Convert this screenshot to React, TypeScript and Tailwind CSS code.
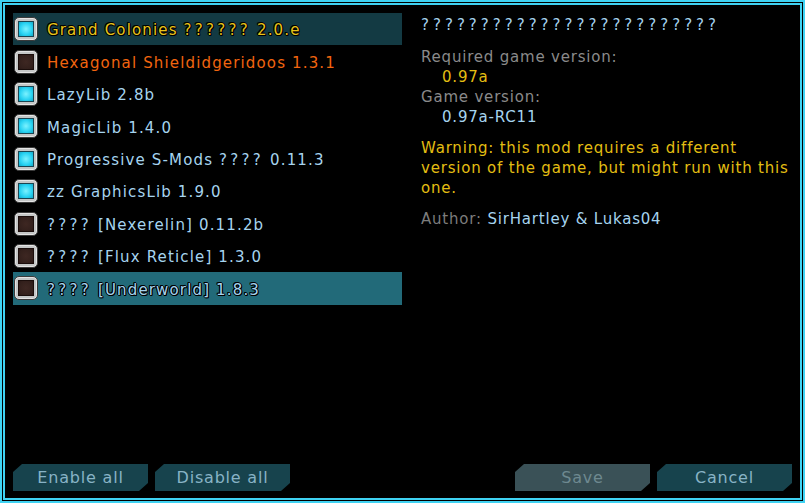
import React from "react";

type Mod = { name: string; on: boolean; color: string; bg?: string; outline?: boolean };

const mods: Mod[] = [
  { name: "Grand Colonies ?????? 2.0.e", on: true, color: "text-[#e8c41a]", bg: "bg-[#133a43]", outline: true },
  { name: "Hexagonal Shieldidgeridoos 1.3.1", on: false, color: "text-[#f2650f]" },
  { name: "LazyLib 2.8b", on: true, color: "text-[#a6d4ef]" },
  { name: "MagicLib 1.4.0", on: true, color: "text-[#a6d4ef]" },
  { name: "Progressive S-Mods ???? 0.11.3", on: true, color: "text-[#a6d4ef]" },
  { name: "zz GraphicsLib 1.9.0", on: true, color: "text-[#a6d4ef]" },
  { name: "???? [Nexerelin] 0.11.2b", on: false, color: "text-[#a6d4ef]" },
  { name: "???? [Flux Reticle] 1.3.0", on: false, color: "text-[#a6d4ef]" },
  { name: "???? [Underworld] 1.8.3", on: false, color: "text-[#a6d4ef]", bg: "bg-[#226a79]", outline: true },
];

function Q({ text }: { text: string }) {
  const parts = text.split(/(\?+)/);
  return (
    <>
      {parts.map((p, i) =>
        p.startsWith("?") ? (
          <span key={i} className="tracking-[3.3px]">
            {p}
          </span>
        ) : (
          <React.Fragment key={i}>{p}</React.Fragment>
        )
      )}
    </>
  );
}

function Check({ on }: { on: boolean }) {
  return (
    <div className="w-[24px] h-[24px] shrink-0 rounded-[5px] bg-[#c4c6c6] border border-[#3a3a3a] p-[3px] shadow-[inset_0_0_0_1px_#e4e4e4]">
      {on ? (
        <div className="w-full h-full border border-[#1b4450] bg-[radial-gradient(circle,#7cf2ff_0%,#28d2f2_60%,#14a8c8_100%)]" />
      ) : (
        <div className="w-full h-full border border-[#1a0d0b] bg-[radial-gradient(circle,#3e2722_0%,#33201c_70%,#2a1815_100%)]" />
      )}
    </div>
  );
}

function Btn({ label, disabled }: { label: string; disabled?: boolean }) {
  return (
    <div
      className={`w-[135px] h-[27px] flex items-center justify-center text-[16px] tracking-[0.8px] [clip-path:polygon(9px_0,100%_0,100%_calc(100%-8px),calc(100%-9px)_100%,0_100%,0_8px)] ${
        disabled ? "bg-[#3a5157] text-[#6e8990]" : "bg-[#17434d] text-[#88b3c6]"
      }`}
      style={{ fontFamily: '"DejaVu Sans", sans-serif' }}
    >
      {label}
    </div>
  );
}

export default function App() {
  const font = { fontFamily: '"DejaVu Sans", sans-serif' };
  return (
    <div className="w-[805px] h-[503px] bg-black border-2 border-[#3fd2f2] p-px" style={font}>
      <div className="w-full h-full border-2 border-[#3fd2f2] flex flex-col px-[8px] pt-[8px] pb-[7px]">
        <div className="flex flex-1">
          <div className="w-[389px] shrink-0 flex flex-col">
            {mods.map((m) => (
              <div key={m.name} className={`h-[32.4px] flex items-center pl-[1px] gap-[9px] ${m.bg ?? ""}`}>
                <Check on={m.on} />
                <span
                  className={`pt-[3px] text-[15px] tracking-[1.15px] whitespace-nowrap ${m.color} ${
                    m.outline ? "[text-shadow:-1px_0_#000,1px_0_#000,0_-1px_#000,0_1px_#000,1px_1px_#000,-1px_-1px_#000]" : ""
                  }`}
                >
                  <Q text={m.name} />
                </span>
              </div>
            ))}
          </div>
          <div className="ml-[19px] pt-[2px] flex flex-col text-[15px] leading-[20px] tracking-[0.8px]">
            <div className="text-[#a6d4ef] tracking-[4px]">?????????????????????????</div>
            <div className="mt-[12px] text-[#8a8a8a]">Required game version:</div>
            <div className="pl-[21px] text-[#e3be12]">0.97a</div>
            <div className="text-[#8a8a8a]">Game version:</div>
            <div className="pl-[21px] text-[#a6d4ef]">0.97a-RC11</div>
            <div className="mt-[11px] w-[372px] text-[#e3be12]">
              Warning: this mod requires a different version of the game, but might run with this one.
            </div>
            <div className="mt-[11px]">
              <span className="text-[#7c7c7c]">Author: </span>
              <span className="text-[#a6d4ef]">SirHartley &amp; Lukas04</span>
            </div>
          </div>
        </div>
        <div className="flex items-center">
          <Btn label="Enable all" />
          <div className="w-[7px]" />
          <Btn label="Disable all" />
          <div className="flex-1" />
          <Btn label="Save" disabled />
          <div className="w-[7px]" />
          <Btn label="Cancel" />
        </div>
      </div>
    </div>
  );
}
